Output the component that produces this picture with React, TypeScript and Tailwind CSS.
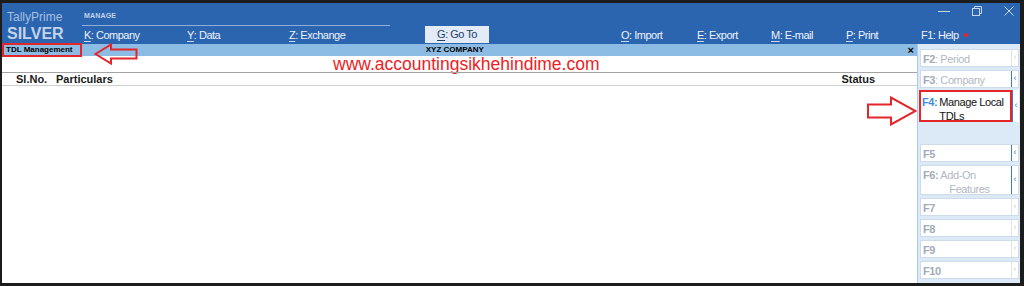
const font = { fontFamily: '"Liberation Sans", Arial, sans-serif' };

type Key = { k: string; label: string; w: string };

const menu: Key[] = [
  { k: "K", label: "Company", w: "w-[103px]" },
  { k: "Y", label: "Data", w: "w-[102px]" },
  { k: "Z", label: "Exchange", w: "w-[136px]" },
];

const menuRight: Key[] = [
  { k: "O", label: "Import", w: "w-[76px]" },
  { k: "E", label: "Export", w: "w-[74px]" },
  { k: "M", label: "E-mail", w: "w-[75px]" },
  { k: "P", label: "Print", w: "w-[75px]" },
];

function MenuItem({ item }: { item: Key }) {
  return (
    <div className={`${item.w} flex items-center`}>
      <span className="underline underline-offset-2 decoration-[#c9d8ee]">{item.k}</span>
      <span>:&nbsp;{item.label}</span>
    </div>
  );
}

function SideButton({
  fkey,
  label,
  active,
  h = "h-[18px]",
  mt = "mt-[3px]",
  children,
}: {
  fkey: string;
  label?: string;
  active?: boolean;
  h?: string;
  mt?: string;
  children?: React.ReactNode;
}) {
  return (
    <div className={`${h} ${mt} ml-[2px] mr-[1px] flex bg-white border border-[#cddbeb]`}>
      <div className="flex-1 flex items-start pt-[2px] pl-[2px] text-[11px] leading-[14px] tracking-[-0.4px]">
        {children ?? (
          <>
            <span className="font-bold text-[#a3abb8]">{fkey}</span>
            {label && <span className="text-[#b0b8c4]">:&nbsp;{label}</span>}
          </>
        )}
      </div>
      <div
        className={`w-[7px] flex items-center justify-center text-[9px] border-l ${
          active ? "border-[#3d7bc9] text-[#3d7bc9]" : "border-[#dbe5f0] text-[#c8d0da]"
        }`}
      >
        ‹
      </div>
    </div>
  );
}

export default function App() {
  return (
    <div
      style={font}
      className="relative w-[1024px] h-[286px] overflow-hidden bg-white border-t-[3px] border-l-[2px] border-r-[4px] border-b-[3px] border-[#1c1c1c] flex flex-col"
    >
      {/* title bar */}
      <div className="h-[41px] shrink-0 flex bg-[#2b65b0]">
        <div className="w-[80px] pl-[5px] pt-[8px] flex flex-col leading-none">
          <span className="text-[12px] text-[#a7bfe1]">TallyPrime</span>
          <span className="mt-[3px] text-[16px] font-bold text-[#c5d3ea]">SILVER</span>
        </div>
        <div className="flex-1 flex flex-col">
          <div className="h-[23px] flex">
            <div className="w-[308px] border-b border-[#8eaedb] flex items-end pb-[4px] pl-[2px] text-[7px] font-bold tracking-wide text-[#c3d3ea]">
              MANAGE
            </div>
            <div className="ml-auto flex items-start pt-[3px] pr-[6px] gap-[22px] text-[#c9d7ec]">
              <svg width="12" height="10" viewBox="0 0 12 10">
                <line x1="0" y1="5.5" x2="12" y2="5.5" stroke="#c9d7ec" strokeWidth="1" />
              </svg>
              <svg width="10" height="10" viewBox="0 0 10 10" fill="none" stroke="#c9d7ec">
                <rect x="0.5" y="2.5" width="7" height="7" />
                <path d="M2.5 2.5V0.5H9.5V7.5H7.5" />
              </svg>
              <svg width="10" height="10" viewBox="0 0 10 10" stroke="#c9d7ec">
                <path d="M0.5 0.5L9.5 9.5M9.5 0.5L0.5 9.5" />
              </svg>
            </div>
          </div>
          <div className="flex-1 flex text-[11px] tracking-[-0.5px] text-[#eef3fb] pl-[2px]">
            {menu.map((m) => (
              <MenuItem key={m.k} item={m} />
            ))}
            <div className="w-[64px] mb-[1px] bg-[#e3ebf6] text-[#20406e] flex items-center justify-center">
              <span className="underline underline-offset-2">G</span>
              <span>:&nbsp;Go To</span>
            </div>
            <div className="w-[132px]" />
            {menuRight.map((m) => (
              <MenuItem key={m.k} item={m} />
            ))}
            <div className="flex items-center">
              <span>F1</span>
              <span>:&nbsp;Help</span>
              <span className="ml-[5px] w-[4px] h-[4px] rounded-full bg-[#ff1a1a]" />
            </div>
          </div>
        </div>
      </div>

      {/* body */}
      <div className="flex-1 flex">
        <div className="flex-1 flex flex-col bg-white">
          <div className="h-[12px] bg-[#8cbbe4] flex items-center text-[8px] font-bold text-black">
            <div className="w-[80px] h-[14px] -mt-[1px] border-2 border-[#e3262a] pl-[2px] flex items-center">
              TDL Management
            </div>
            <div className="flex-1 text-center pr-[80px]">XYZ COMPANY</div>
            <div className="pr-[3px] text-[11px] leading-none">×</div>
          </div>
          <div className="h-[16px] pl-[331px] text-[17.5px] leading-[16px] text-[#ee1c24]">
            www.accountingsikhehindime.com
          </div>
          <div className="h-[14px] border-t border-[#a3a3a3] border-b border-b-[#cfcfcf] flex items-center text-[11px] font-bold text-[#1a1a1a]">
            <span className="w-[54px] pl-[14px]">Sl.No.</span>
            <span className="flex-1">Particulars</span>
            <span className="pr-[42px]">Status</span>
          </div>
        </div>

        {/* right button bar */}
        <div className="w-[103px] bg-[#dceaf8] border-l border-[#a9cbee] pt-[5px] flex flex-col">
          <SideButton fkey="F2" label="Period" mt="mt-0" />
          <SideButton fkey="F3" label="Company" active />
          <div className="h-[32px] mt-[2px] ml-[1px] mr-[1px] flex">
            <div className="flex-1 bg-white border-2 border-[#e3262a] flex items-start pt-[3px] pl-[1px] text-[11px] leading-[14px] tracking-[-0.4px]">
              <span className="font-bold text-[#3f8fd6]">F4:</span>
              <span className="ml-[2px] text-[#111]">
                Manage Local
                <br />
                TDLs
              </span>
            </div>
            <div className="w-[7px] bg-white flex items-center justify-center text-[9px] text-[#3d7bc9] border-l border-[#3d7bc9]">
              ‹
            </div>
          </div>
          <SideButton fkey="F5" active mt="mt-[22px]" />
          <SideButton fkey="F6" active h="h-[30px]">
            <span className="font-bold text-[#a3abb8]">F6:</span>
            <span className="ml-[2px] text-[#b0b8c4]">
              Add-On
              <br />
              <span className="pl-[9px]">Features</span>
            </span>
          </SideButton>
          <SideButton fkey="F7" />
          <SideButton fkey="F8" />
          <SideButton fkey="F9" />
          <SideButton fkey="F10" />
        </div>
      </div>

      {/* annotation arrows */}
      <svg
        className="absolute left-[92px] top-[40px]"
        width="44"
        height="22"
        viewBox="0 0 44 22"
        fill="none"
        stroke="#e3262a"
        strokeWidth="2"
      >
        <path d="M1.5 11L17 1.5V6.5H42.5V15.5H17V20.5Z" />
      </svg>
      <svg
        className="absolute left-[865px] top-[93px]"
        width="50"
        height="30"
        viewBox="0 0 50 30"
        fill="none"
        stroke="#e3262a"
        strokeWidth="2"
      >
        <path d="M1 8.5H24V1.5L48.5 15L24 28.5V21.5H1Z" />
      </svg>
    </div>
  );
}
